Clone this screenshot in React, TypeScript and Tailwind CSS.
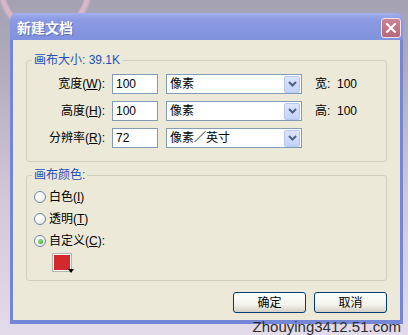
import React from 'react';

const FONT = "font-[family-name:'Liberation_Sans','Noto_Sans_CJK_SC',sans-serif]";

function Chevron() {
	return (
		<div className="ml-auto mr-[1px] flex h-[17px] w-[16px] items-center justify-center rounded-[2px] border border-[#b5c8f2] bg-[linear-gradient(180deg,#dbe5fc_0%,#c2d3fa_100%)]">
			<svg width="9" height="6" viewBox="0 0 9 6">
				<polyline points="1,1 4.5,4.5 8,1" fill="none" stroke="#4d6185" strokeWidth="2" />
			</svg>
		</div>
	);
}

function Row({ label, mnemonic, suffix, value, unit, info }: { label: string; mnemonic: string; suffix: string; value: string; unit: string; info?: string }) {
	return (
		<div className="flex h-[20px] items-center">
			<div className="w-[78px] text-right">
				{label}(<u>{mnemonic}</u>){suffix}
			</div>
			<div className="ml-[7px] flex h-[20px] w-[46px] items-center border border-[#7f9db9] bg-white pl-[3px]">{value}</div>
			<div className="ml-[8px] flex h-[20px] w-[136px] items-center border border-[#7f9db9] bg-white pl-[3px]">
				<span>{unit}</span>
				<Chevron />
			</div>
			{info && <div className="ml-[13px] whitespace-pre">{info}</div>}
		</div>
	);
}

function Radio({ checked, label, mnemonic, suffix }: { checked?: boolean; label: string; mnemonic: string; suffix?: string }) {
	return (
		<div className="flex h-[16px] items-center">
			<div className="flex h-[12px] w-[12px] items-center justify-center rounded-full border border-[#6d87a8] bg-[radial-gradient(circle_at_35%_35%,#ffffff_30%,#dcdcd4_100%)]">
				{checked && <div className="h-[5px] w-[5px] rounded-full bg-[radial-gradient(circle_at_40%_40%,#9be48b_0%,#2f9a2f_90%)]" />}
			</div>
			<span className="ml-[3px]">
				{label}(<u>{mnemonic}</u>){suffix}
			</span>
		</div>
	);
}

function XpButton({ children }: { children: React.ReactNode }) {
	return (
		<button className="h-[21px] w-[73px] rounded-[3px] border border-[#003c74] bg-[linear-gradient(180deg,#ffffff_0%,#f4f3ee_60%,#d6d0c5_100%)] text-[12px] leading-none text-black">
			{children}
		</button>
	);
}

export default function App() {
	return (
		<div
			className={`relative h-[335px] w-[408px] overflow-hidden bg-[radial-gradient(circle_at_45px_-12px,transparent_40px,#d9b6c8_42px,#d9b6c8_45px,transparent_48px),linear-gradient(180deg,#a4a2b2_0px,#aaa7b8_40px,#d2c8d8_200px,#e3dbea_335px)] pt-[13px] text-[12px] text-black ${FONT}`}
		>
			<div className="ml-[10px] flex w-[393px] flex-col">
				{/* Title bar */}
				<div className="flex h-[27px] items-start justify-between rounded-t-[7px] bg-[linear-gradient(180deg,#a3b0ee_0%,#8b9ae2_25%,#8192de_100%)] pl-[7px]">
					<span className="pt-[7px] text-[14px] font-bold leading-[16px] text-white [text-shadow:1px_1px_#6070b8]">新建文档</span>
					<div className="mr-[2px] mt-[5px] flex h-[20px] w-[20px] items-center justify-center rounded-[3px] border border-[#f0e4ea] bg-[linear-gradient(180deg,#cc8696_0%,#b8667a_100%)]">
						<svg width="10" height="10" viewBox="0 0 10 10">
							<path d="M1 1 L9 9 M9 1 L1 9" stroke="#ffffff" strokeWidth="2" strokeLinecap="square" />
						</svg>
					</div>
				</div>

				{/* Client area */}
				<div className="border-x-[3px] border-b-[4px] border-[#7486d6] bg-[#ece9d8] px-[13px] pb-[7px] pt-[13px]">
					<fieldset className="rounded-[3px] border border-[#d0d0bf] pb-[13px] pt-[7px]">
						<legend className="ml-[5px] px-[2px] leading-[14px] text-[#1d50b8]">画布大小: 39.1K</legend>
						<div className="flex flex-col gap-[7px]">
							<Row label="宽度" mnemonic="W" suffix=":" value="100" unit="像素" info="宽:  100" />
							<Row label="高度" mnemonic="H" suffix=":" value="100" unit="像素" info="高:  100" />
							<Row label="分辨率" mnemonic="R" suffix=":" value="72" unit="像素／英寸" />
						</div>
					</fieldset>

					<fieldset className="mt-[6px] rounded-[3px] border border-[#d0d0bf] pb-[8px] pl-[7px] pt-[7px]">
						<legend className="-ml-[2px] px-[2px] leading-[14px] text-[#1d50b8]">画布颜色:</legend>
						<div className="flex flex-col gap-[6px]">
							<Radio label="白色" mnemonic="I" />
							<Radio label="透明" mnemonic="T" />
							<Radio checked label="自定义" mnemonic="C" suffix=":" />
						</div>
						<div className="relative ml-[18px] mt-[4px] h-[19px] w-[20px] border border-[#b8b4a8] bg-white p-[1px]">
							<div className="h-full w-full bg-[#d2292c]" />
							<svg className="absolute -bottom-[2px] -right-[3px]" width="6" height="4" viewBox="0 0 6 4">
								<polygon points="0,0 6,0 3,4" fill="#000000" />
							</svg>
						</div>
					</fieldset>

					<div className="mt-[11px] flex justify-end gap-[8px]">
						<XpButton>确定</XpButton>
						<XpButton>取消</XpButton>
					</div>
				</div>
			</div>

			<div className="absolute bottom-[0px] right-[7px] text-[15px] leading-[16px] text-[#2e2e2e]">Zhouying3412.51.com</div>
		</div>
	);
}
